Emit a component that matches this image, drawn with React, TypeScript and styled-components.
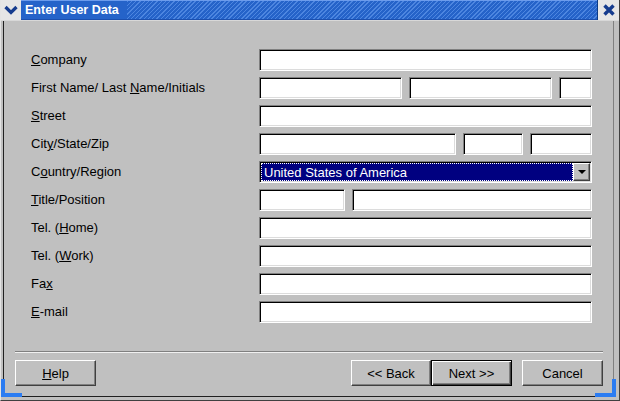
import { FC, Fragment } from "react";
import styled, { createGlobalStyle } from "styled-components";

const GlobalStyle = createGlobalStyle`
    html, body {
        margin: 0;
        padding: 0;
        background: #c0c0c0;
    }
    body {
        font-family: "Liberation Sans", Arial, sans-serif;
        font-size: 13px;
        color: #000;
    }
`;

const Window = styled.div`
    position: relative;
    box-sizing: border-box;
    width: 620px;
    height: 401px;
    display: flex;
    flex-direction: column;
    background: #c0c0c0;
    border-left: 1px solid #e4e4e4;
    border-right: 1px solid #404040;
    border-bottom: 1px solid #404040;
`;

const TitleBar = styled.div`
    height: 20px;
    display: flex;
    border-bottom: 1px solid #d8d8d8;
`;

const TitleButton = styled.div`
    width: 20px;
    height: 20px;
    display: flex;
    align-items: center;
    justify-content: center;
    background: #e6e6e6;
    svg {
        display: block;
    }
`;

const CloseButton = styled(TitleButton)`
    width: 21px;
    border-left: 1px solid #0b3a86;
`;

const TitleStripes = styled.div`
    flex: 1;
    display: flex;
    align-items: center;
    background-color: #2563c9;
    background-image: repeating-linear-gradient(
        -45deg,
        #2563c9 0px,
        #2563c9 2px,
        #4d86e0 2px,
        #4d86e0 3px
    );
    border-top: 1px solid #6c9cec;
    border-bottom: 1px solid #1b4fae;
`;

const TitleText = styled.div`
    height: 100%;
    display: flex;
    align-items: center;
    padding: 0 8px 0 4px;
    background: #2563c9;
    color: #fff;
    font-weight: bold;
    font-size: 12.5px;
`;

const Body = styled.div`
    flex: 1;
    display: flex;
    flex-direction: column;
    margin: 0 5px 3px 2px;
    border-left: 1px solid #202020;
    border-right: 1px solid #808080;
    border-bottom: 1px solid #202020;
    background: #c0c0c0;
`;

const Form = styled.div`
    display: grid;
    grid-template-columns: 228px 333px;
    grid-auto-rows: 22px;
    row-gap: 6px;
    padding: 28px 0 0 27px;
`;

const Label = styled.div`
    line-height: 22px;
    white-space: nowrap;
`;

const Mn = styled.span`
    text-decoration: underline;
    text-underline-offset: 1px;
`;

const FieldGroup = styled.div<{ $cols: string }>`
    display: grid;
    grid-template-columns: ${(p) => p.$cols};
    column-gap: 7px;
`;

const Input = styled.div`
    box-sizing: border-box;
    height: 22px;
    background: #fff;
    border: 1px solid;
    border-color: #808080 #fff #fff #808080;
    box-shadow: inset 1px 1px 0 #000, inset -1px -1px 0 #dcdcdc;
`;

const Select = styled.div`
    box-sizing: border-box;
    height: 22px;
    display: flex;
    align-items: stretch;
    background: #000080;
    border: 1px solid;
    border-color: #808080 #fff #fff #808080;
    box-shadow: inset 1px 1px 0 #000, inset -1px -1px 0 #dcdcdc;
    padding: 1px;
`;

const SelectValue = styled.div`
    flex: 1;
    display: flex;
    align-items: center;
    padding-left: 2px;
    color: #fff;
    border: 1px dotted #fff;
`;

const SelectArrow = styled.div`
    box-sizing: border-box;
    width: 17px;
    display: flex;
    align-items: center;
    justify-content: center;
    background: #c0c0c0;
    border: 1px solid;
    border-color: #fff #404040 #404040 #fff;
    box-shadow: inset -1px -1px 0 #808080;
    &::after {
        content: "";
        border-left: 4px solid transparent;
        border-right: 4px solid transparent;
        border-top: 4px solid #000;
    }
`;

const Separator = styled.div`
    margin: 28px 10px 0 11px;
    height: 1px;
    background: #808080;
    border-bottom: 1px solid #f0f0f0;
`;

const Footer = styled.div`
    display: flex;
    padding: 7px 10px 0 11px;
`;

const ButtonPair = styled.div`
    margin-left: auto;
    display: flex;
    gap: 10px;
`;

const Buttons = styled.div`
    display: flex;
`;

const Button = styled.div<{ $default?: boolean; $w?: number }>`
    box-sizing: border-box;
    width: ${(p) => p.$w ?? 81}px;
    height: 26px;
    display: flex;
    align-items: center;
    justify-content: center;
    background: #c0c0c0;
    border: 1px solid;
    border-color: ${(p) => (p.$default ? "#000" : "#fff #404040 #404040 #fff")};
    box-shadow: ${(p) =>
        p.$default
            ? "inset 1px 1px 0 #fff, inset -1px -1px 0 #404040, inset -2px -2px 0 #808080"
            : "inset -1px -1px 0 #808080"};
`;

const Corner = styled.div<{ $side: "left" | "right" }>`
    position: absolute;
    bottom: 3px;
    ${(p) => (p.$side === "left" ? "left: 0;" : "right: 3px;")}
    width: 21px;
    height: 18px;
    box-sizing: border-box;
    border-bottom: 4px solid #2b7cf2;
    ${(p) =>
        p.$side === "left"
            ? "border-left: 4px solid #2b7cf2;"
            : "border-right: 4px solid #2b7cf2;"}
`;

const rows: { label: JSX.Element; cols?: string; select?: boolean }[] = [
    { label: <><Mn>C</Mn>ompany</> },
    { label: <>First Name/ Last <Mn>N</Mn>ame/Initials</>, cols: "143px 143px 33px" },
    { label: <><Mn>S</Mn>treet</> },
    { label: <>Cit<Mn>y</Mn>/State/Zip</>, cols: "197px 60px 62px" },
    { label: <>C<Mn>o</Mn>untry/Region</>, select: true },
    { label: <><Mn>T</Mn>itle/Position</>, cols: "86px 240px" },
    { label: <>Tel. (<Mn>H</Mn>ome)</> },
    { label: <>Tel. (<Mn>W</Mn>ork)</> },
    { label: <>Fa<Mn>x</Mn></> },
    { label: <><Mn>E</Mn>-mail</> },
];

const App: FC = () => {
    return (
        <>
            <GlobalStyle />
            <Window>
                <TitleBar>
                    <TitleButton>
                        <svg width="16" height="12" viewBox="0 0 16 12">
                            <path d="M2.5 3 L8 8.5 L13.5 3" fill="none" stroke="#163c8e" strokeWidth="3.2" />
                        </svg>
                    </TitleButton>
                    <TitleStripes>
                        <TitleText>Enter User Data</TitleText>
                    </TitleStripes>
                    <CloseButton>
                        <svg width="14" height="14" viewBox="0 0 14 14">
                            <path d="M2.5 2.5 L11.5 11.5 M11.5 2.5 L2.5 11.5" stroke="#163c8e" strokeWidth="3.4" />
                        </svg>
                    </CloseButton>
                </TitleBar>
                <Body>
                    <Form>
                        {rows.map((r, i) => (
                            <Fragment key={i}>
                                <Label>{r.label}</Label>
                                {r.select ? (
                                    <Select>
                                        <SelectValue>United States of America</SelectValue>
                                        <SelectArrow />
                                    </Select>
                                ) : r.cols ? (
                                    <FieldGroup $cols={r.cols}>
                                        {r.cols.split(" ").map((_, j) => (
                                            <Input key={j} />
                                        ))}
                                    </FieldGroup>
                                ) : (
                                    <Input />
                                )}
                            </Fragment>
                        ))}
                    </Form>
                    <Separator />
                    <Footer>
                        <Button>
                            <span><Mn>H</Mn>elp</span>
                        </Button>
                        <ButtonPair>
                            <Buttons>
                                <Button $w={80}>&lt;&lt; Back</Button>
                                <Button $default>Next &gt;&gt;</Button>
                            </Buttons>
                            <Button>Cancel</Button>
                        </ButtonPair>
                    </Footer>
                </Body>
                <Corner $side="left" />
                <Corner $side="right" />
            </Window>
        </>
    );
};

export default App;
